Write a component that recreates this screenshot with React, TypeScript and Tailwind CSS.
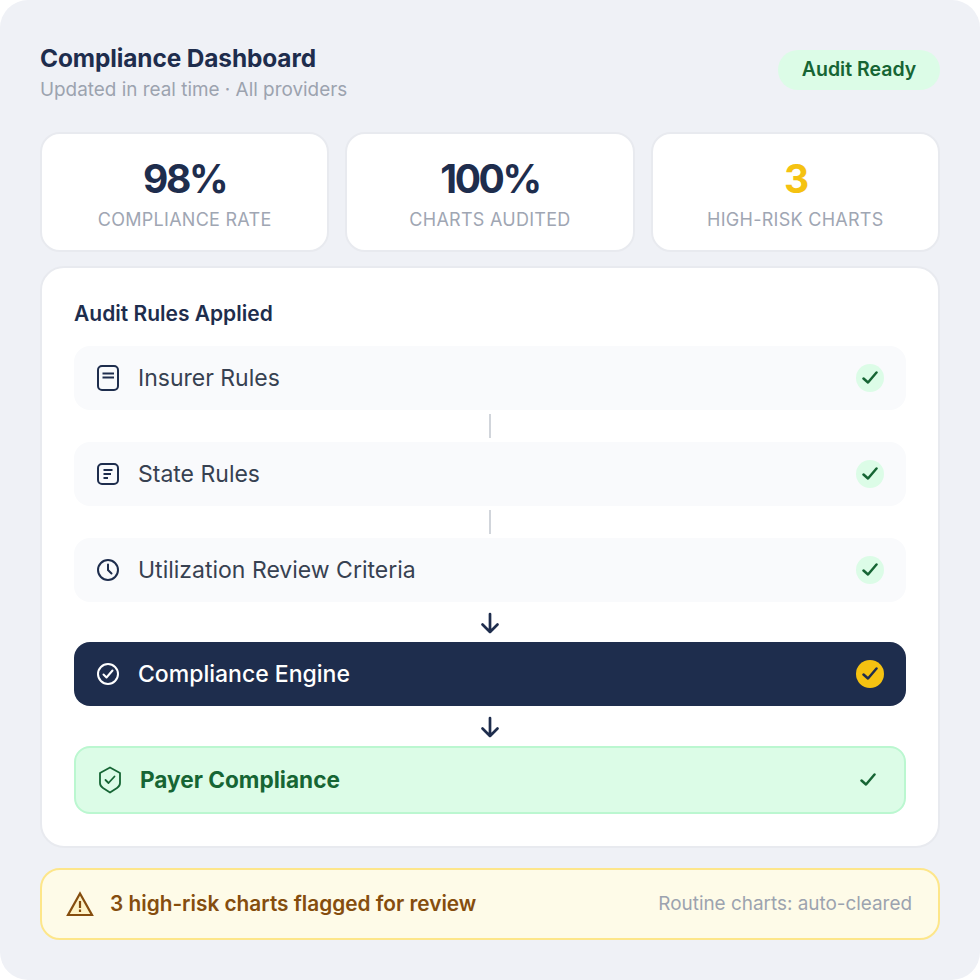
const font = "font-['Inter',sans-serif]";

function Check({ color }: { color: string }) {
  return (
    <svg width="16" height="16" viewBox="0 0 16 16" fill="none" stroke={color} strokeWidth="2.5" strokeLinecap="round" strokeLinejoin="round">
      <path d="M1.5 8.5 L6 12.5 L14.5 2.5" />
    </svg>
  );
}

function InsurerIcon() {
  return (
    <svg width="24" height="28" viewBox="0 0 24 28" fill="none" stroke="#1e2d4d" strokeWidth="2">
      <rect x="2" y="2" width="20" height="24" rx="4" />
      <path d="M6.5 9.5 H18 M6.5 13.5 H18" />
    </svg>
  );
}

function StateIcon() {
  return (
    <svg width="24" height="24" viewBox="0 0 24 24" fill="none" stroke="#1e2d4d" strokeWidth="2">
      <rect x="2" y="2" width="20" height="20" rx="4" />
      <path d="M7.5 8 H16.5 M7.5 12 H15 M7.5 16 H12" />
    </svg>
  );
}

function ClockIcon() {
  return (
    <svg width="24" height="24" viewBox="0 0 24 24" fill="none" stroke="#1e2d4d" strokeWidth="2" strokeLinecap="round">
      <circle cx="12" cy="12" r="10" />
      <path d="M12 6.5 V12 L15.5 15.5" />
    </svg>
  );
}

function CircleCheckIcon() {
  return (
    <svg width="24" height="24" viewBox="0 0 24 24" fill="none" stroke="#ffffff" strokeWidth="2" strokeLinecap="round" strokeLinejoin="round">
      <circle cx="12" cy="12" r="10" />
      <path d="M7.5 12.5 L10.5 15.5 L16.5 8.5" />
    </svg>
  );
}

function ShieldIcon() {
  return (
    <svg width="24" height="28" viewBox="0 0 24 28" fill="none" stroke="#166534" strokeWidth="1.8" strokeLinejoin="round" strokeLinecap="round">
      <path d="M12 1.5 L22 7 V17 Q22 20 19 22 L12 26.5 L5 22 Q2 20 2 17 V7 Z" />
      <path d="M7.5 14 L10.5 17 L16.5 10.5" />
    </svg>
  );
}

function WarnIcon() {
  return (
    <svg width="28" height="26" viewBox="0 0 28 26" fill="#fef3c7" stroke="#854d0e" strokeWidth="2.2" strokeLinejoin="miter">
      <path d="M14 2.5 L26 24 H2 Z" />
      <path d="M14 10 V17 M14 18.5 V21" fill="none" />
    </svg>
  );
}

function Stat({ value, label, valueClass }: { value: string; label: string; valueClass: string }) {
  return (
    <div className="h-[120px] rounded-[20px] border-2 border-[#e8eaef] bg-white flex flex-col items-center pt-[21px]">
      <div className={`text-[39px] leading-[48px] font-bold tracking-[-2.4px] ${valueClass}`}>{value}</div>
      <div className="mt-[5px] text-[18px] leading-[24px] tracking-[0.27px] text-[#a0a6b3]">{label}</div>
    </div>
  );
}

function RuleRow({ icon, label }: { icon: React.ReactNode; label: string }) {
  return (
    <div className="h-16 rounded-2xl bg-[#f9fafc] flex items-center px-[22px]">
      <div className="w-6 flex justify-center">{icon}</div>
      <span className="ml-[18px] flex-1 text-[23px] text-[#374151]">{label}</span>
      <div className="w-7 h-7 rounded-full bg-[#dcfce7] flex items-center justify-center">
        <Check color="#166534" />
      </div>
    </div>
  );
}

function Connector() {
  return (
    <div className="h-8 flex items-center justify-center">
      <div className="w-0.5 h-6 bg-[#d1d5db]" />
    </div>
  );
}

function Arrow() {
  return (
    <div className="h-10 flex items-center justify-center pt-0.5">
      <svg width="24" height="24" viewBox="0 0 24 24" fill="none" stroke="#1e2d4d" strokeWidth="2.7" strokeLinecap="round" strokeLinejoin="round">
        <path d="M12 3 V21 M4.5 13.5 L12 21 L19.5 13.5" />
      </svg>
    </div>
  );
}

export default function App() {
  return (
    <div className={`w-[980px] h-[980px] bg-white ${font}`}>
      <div className="w-full h-full rounded-[28px] bg-[#eff1f6] px-10 pt-10">
        {/* Header */}
        <div className="flex justify-between items-start h-[92px]">
          <div>
            <div className="text-[24.4px] leading-[36px] font-bold tracking-[-0.1px] text-[#1e2d4d]">Compliance Dashboard</div>
            <div className="mt-px text-[18.9px] leading-[26px] text-[#9ca3af]">Updated in real time · All providers</div>
          </div>
          <div className="mt-[10px] w-[162px] h-10 rounded-full bg-[#dcfce7] flex items-center justify-center text-[19.5px] font-semibold text-[#166534]">
            Audit Ready
          </div>
        </div>

        {/* Stats */}
        <div className="grid grid-cols-3 gap-4">
          <Stat value="98%" label="COMPLIANCE RATE" valueClass="text-[#1e2d4d]" />
          <Stat value="100%" label="CHARTS AUDITED" valueClass="text-[#1e2d4d]" />
          <Stat value="3" label="HIGH-RISK CHARTS" valueClass="text-[#f5c211]" />
        </div>

        {/* Rules */}
        <div className="mt-[14px] h-[582px] rounded-3xl border-2 border-[#e8eaef] bg-white px-8 pt-8">
          <div className="text-[21px] leading-[28px] font-semibold text-[#1e2d4d] mb-[18px]">Audit Rules Applied</div>
          <RuleRow icon={<InsurerIcon />} label="Insurer Rules" />
          <Connector />
          <RuleRow icon={<StateIcon />} label="State Rules" />
          <Connector />
          <RuleRow icon={<ClockIcon />} label="Utilization Review Criteria" />
          <Arrow />
          <div className="h-16 rounded-2xl bg-[#1e2d4d] flex items-center px-[22px]">
            <div className="w-6 flex justify-center"><CircleCheckIcon /></div>
            <span className="ml-[18px] flex-1 text-[23px] font-medium text-white">Compliance Engine</span>
            <div className="w-7 h-7 rounded-full bg-[#f5c211] flex items-center justify-center">
              <Check color="#1e2d4d" />
            </div>
          </div>
          <Arrow />
          <div className="h-[68px] rounded-2xl border-2 border-[#bbf7d0] bg-[#dcfce7] flex items-center px-[22px]">
            <div className="w-6 flex justify-center"><ShieldIcon /></div>
            <span className="ml-[18px] flex-1 text-[22.6px] font-bold text-[#166534]">Payer Compliance</span>
            <div className="w-7 h-7 flex items-center justify-center">
              <Check color="#166534" />
            </div>
          </div>
        </div>

        {/* Alert */}
        <div className="mt-5 h-[72px] rounded-[20px] border-2 border-[#fde68a] bg-[#fefbe8] flex items-center pl-6 pr-[26px]">
          <WarnIcon />
          <span className="ml-[16px] flex-1 text-[20.8px] font-semibold text-[#854d0e]">3 high-risk charts flagged for review</span>
          <span className="text-[18.9px] text-[#9ca3af]">Routine charts: auto-cleared</span>
        </div>
      </div>
    </div>
  );
}
